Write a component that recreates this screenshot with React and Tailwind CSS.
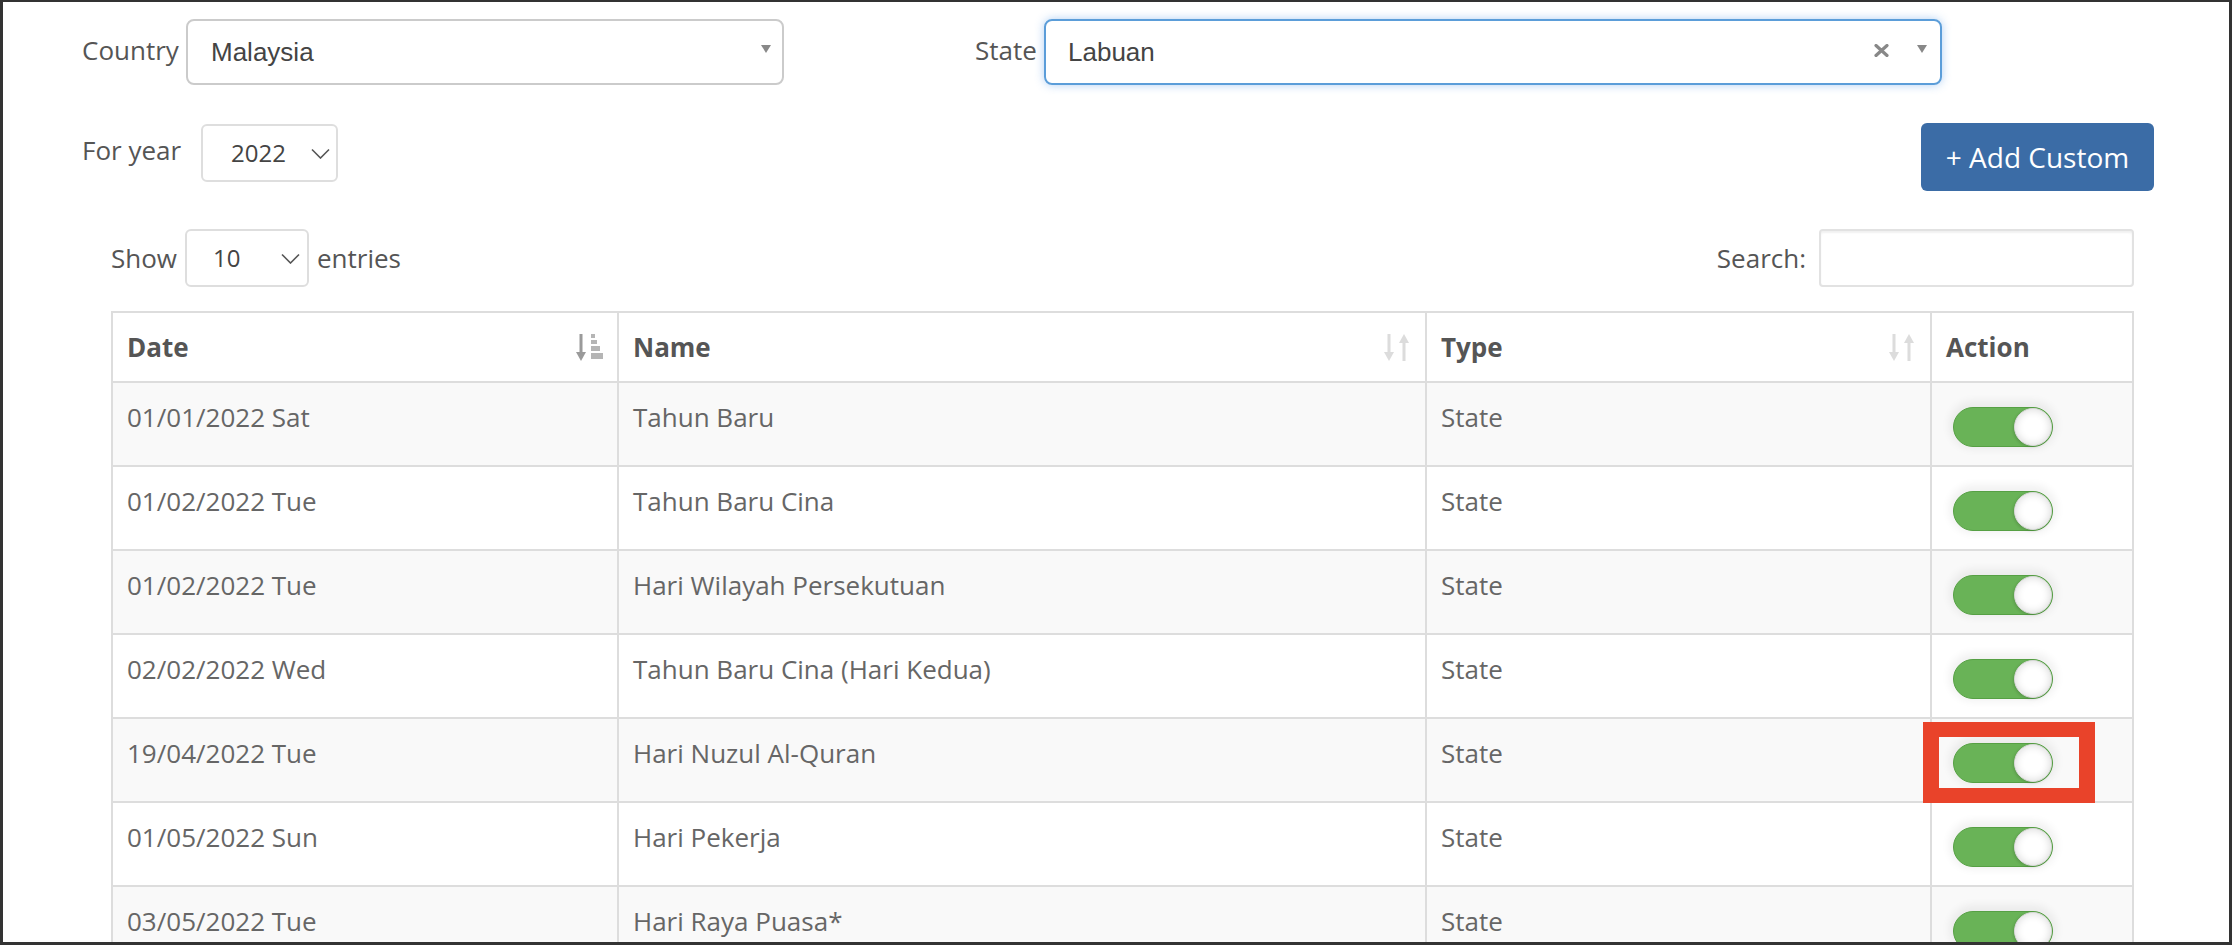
const rows = [
  ['01/01/2022 Sat', 'Tahun Baru'],
  ['01/02/2022 Tue', 'Tahun Baru Cina'],
  ['01/02/2022 Tue', 'Hari Wilayah Persekutuan'],
  ['02/02/2022 Wed', 'Tahun Baru Cina (Hari Kedua)'],
  ['19/04/2022 Tue', 'Hari Nuzul Al-Quran'],
  ['01/05/2022 Sun', 'Hari Pekerja'],
  ['03/05/2022 Tue', 'Hari Raya Puasa*'],
];

function Caret() {
  return (
    <svg width="10" height="8" viewBox="0 0 10 8">
      <polygon points="0,0 10,0 5,8" fill="#888" />
    </svg>
  );
}

function ClearX() {
  return (
    <svg width="15" height="13" viewBox="0 0 15 13">
      <path d="M2 1.5 L13 11.5 M13 1.5 L2 11.5" stroke="#888" strokeWidth="3.2" strokeLinecap="round" />
    </svg>
  );
}

function Chevron() {
  return (
    <svg width="19" height="11" viewBox="0 0 19 11" fill="none">
      <path d="M1 1.5 L9.5 10 L18 1.5" stroke="#555" strokeWidth="1.6" />
    </svg>
  );
}

function SortBoth() {
  return (
    <svg width="25" height="27" viewBox="0 0 25 27">
      <rect x="3.5" y="0" width="3" height="20" fill="#dcdcdc" />
      <polygon points="0,18 10,18 5,27" fill="#dcdcdc" />
      <rect x="18.5" y="7" width="3" height="20" fill="#dcdcdc" />
      <polygon points="15,9 25,9 20,0" fill="#dcdcdc" />
    </svg>
  );
}

function SortAsc() {
  return (
    <svg width="28" height="27" viewBox="0 0 28 27">
      <rect x="3.5" y="0" width="3" height="20" fill="#9a9a9a" />
      <polygon points="0,18 10,18 5,27" fill="#9a9a9a" />
      <rect x="15" y="0" width="4" height="4" fill="#b5b5b5" />
      <rect x="15" y="6" width="6" height="4" fill="#b5b5b5" />
      <rect x="15" y="12" width="9" height="5" fill="#b5b5b5" />
      <rect x="15" y="19" width="12" height="6" fill="#b5b5b5" />
    </svg>
  );
}

function Toggle() {
  return (
    <div className="w-[100px] h-[40px] rounded-full shadow-[0_-2px_8px_4px_rgba(0,0,0,0.06)]">
      <div className="w-full h-full rounded-full bg-[#69b357] border border-[#56a044] flex items-center justify-end">
        <div className="w-[38px] h-[38px] rounded-full bg-white border border-[#d8d8d8] shadow-[inset_0_0_8px_rgba(0,0,0,0.16),-1px_1px_3px_rgba(0,0,0,0.15)]" />
      </div>
    </div>
  );
}

export default function App() {
  return (
    <div className="w-[2232px] h-[945px] overflow-hidden bg-white border-[3px] border-t-2 border-[#333] font-['Open_Sans',sans-serif] text-[26px] text-[#555]">
      {/* Country / State */}
      <div className="flex items-center h-[66px] mt-[17px] pl-[79px]">
        <span className="w-[104px] mb-[3px]">Country</span>
        <div className="w-[598px] h-[66px] border-2 border-[#cbcbcb] rounded-[8px] flex items-center justify-between pl-[23px] pr-[11px] font-['Liberation_Sans',Arial,sans-serif] text-[#444]">
          <span>Malaysia</span>
          <span className="mb-[6px]"><Caret /></span>
        </div>
        <span className="ml-[191px] w-[69px] mb-[3px]">State</span>
        <div className="w-[898px] h-[66px] border-2 border-[#5b9dd9] rounded-[8px] shadow-[0_0_10px_rgba(82,150,230,0.45)] flex items-center pl-[22px] pr-[13px] font-['Liberation_Sans',Arial,sans-serif] text-[#444]">
          <span className="flex-1">Labuan</span>
          <span className="mr-[28px] mb-[4px]"><ClearX /></span>
          <span className="mb-[6px]"><Caret /></span>
        </div>
      </div>

      {/* Year / Add Custom */}
      <div className="flex items-start justify-between mt-[38px] pl-[79px] pr-[75px] h-[68px]">
        <div className="flex items-center mt-[1px] h-[58px]">
          <span className="w-[119px] mb-[6px]">For year</span>
          <div className="w-[137px] h-[58px] border-2 border-[#dedede] rounded-[6px] flex items-center justify-between pl-[28px] pr-[6px] text-[24px] text-[#444]">
            <span>2022</span>
            <Chevron />
          </div>
        </div>
        <button className="w-[233px] h-[68px] rounded-[6px] bg-[#3b6ca6] text-white text-[28px]">
          + Add Custom
        </button>
      </div>

      {/* Show entries / Search */}
      <div className="flex items-center justify-between mt-[38px] pl-[108px] pr-[95px] h-[58px]">
        <div className="flex items-center">
          <span className="w-[74px]">Show</span>
          <div className="w-[124px] h-[58px] border-2 border-[#dedede] rounded-[6px] flex items-center justify-between pl-[26px] pr-[7px] text-[24px] text-[#444]">
            <span>10</span>
            <Chevron />
          </div>
          <span className="ml-[8px]">entries</span>
        </div>
        <div className="flex items-center">
          <span className="mr-[13px]">Search:</span>
          <div className="w-[315px] h-[58px] border-2 border-[#e2e2e2] rounded-[4px] shadow-[inset_0_2px_2px_rgba(0,0,0,0.06)]" />
        </div>
      </div>

      {/* Table */}
      <div className="mt-[24px] ml-[108px] w-[2023px] border-l-2 border-t-2 border-[#ddd]">
        <div className="grid grid-cols-[506px_808px_505px_202px] h-[70px] font-bold text-[#555]">
          <div className="border-r-2 border-b-2 border-[#ddd] flex items-center justify-between pl-[14px] pr-[13px]">
            <span>Date</span>
            <SortAsc />
          </div>
          <div className="border-r-2 border-b-2 border-[#ddd] flex items-center justify-between pl-[14px] pr-[16px]">
            <span>Name</span>
            <SortBoth />
          </div>
          <div className="border-r-2 border-b-2 border-[#ddd] flex items-center justify-between pl-[14px] pr-[16px]">
            <span>Type</span>
            <SortBoth />
          </div>
          <div className="border-r-2 border-b-2 border-[#ddd] flex items-center pl-[14px]">
            <span>Action</span>
          </div>
        </div>
        {rows.map(([date, name], i) => (
          <div
            key={i}
            className={`grid grid-cols-[506px_808px_505px_202px] h-[84px] text-[#666] leading-[37px] ${i % 2 === 0 ? 'bg-[#f9f9f9]' : 'bg-white'}`}
          >
            <div className="border-r-2 border-b-2 border-[#ddd] pl-[14px] pt-[16px]">{date}</div>
            <div className="border-r-2 border-b-2 border-[#ddd] pl-[14px] pt-[16px]">{name}</div>
            <div className="border-r-2 border-b-2 border-[#ddd] pl-[14px] pt-[16px]">State</div>
            <div className="relative border-r-2 border-b-2 border-[#ddd] pl-[21px] pt-[24px]">
              <Toggle />
              {i === 4 && (
                <div className="absolute left-[-9px] top-[3px] w-[172px] h-[81px] border-[15px] border-l-[16px] border-r-[16px] border-[#e9432a]" />
              )}
            </div>
          </div>
        ))}
      </div>
    </div>
  );
}
